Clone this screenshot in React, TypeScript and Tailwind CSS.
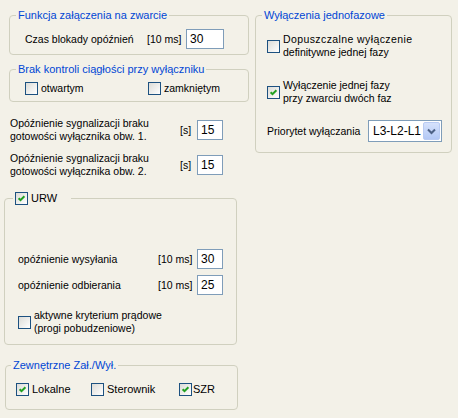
import React from "react";

function Box({ checked }: { checked?: boolean }) {
  return (
    <span className="relative inline-block w-[13px] h-[13px] shrink-0 border border-[#1C5180] bg-linear-to-br from-[#DCDCD7] to-white">
      {checked && (
        <svg className="absolute left-0 top-0" width="11" height="11" viewBox="0 0 11 11">
          <path d="M2.6 5.3 L4.5 7.2 L8.4 3.3" stroke="#21A121" strokeWidth="2" fill="none" />
        </svg>
      )}
    </span>
  );
}

function Input({ value, w }: { value: string; w: string }) {
  return (
    <div className={`${w} h-[20px] bg-white border border-[#7F9DB9] pl-[3px] flex items-center text-[12px]`}>
      {value}
    </div>
  );
}

export default function App() {
  return (
    <div className="w-[458px] h-[418px] bg-[#F3F1E8] overflow-hidden flex font-['Liberation_Sans',Arial,sans-serif] text-[10.5px] leading-[13px] text-black">
      {/* left column */}
      <div className="w-[250px] shrink-0 flex flex-col">
        <fieldset className="ml-[9px] mt-[9px] w-[240px] border border-[#D0D0BF] rounded-[4px] pb-[5px]">
          <legend className="ml-[6px] px-[2px] text-[#0046D5] text-[11px]">Funkcja załączenia na zwarcie</legend>
          <div className="mt-[7px] h-[20px] flex items-center pl-[15px]">
            <span className="w-[122px]">Czas blokady opóźnień</span>
            <span className="w-[39px]">[10 ms]</span>
            <Input value="30" w="w-[38px]" />
          </div>
        </fieldset>

        <fieldset className="ml-[9px] mt-[8px] w-[240px] border border-[#D0D0BF] rounded-[4px] pb-[6px]">
          <legend className="ml-[6px] px-[2px] text-[#0046D5] text-[11px]">Brak kontroli ciągłości przy wyłączniku</legend>
          <div className="mt-[6px] h-[13px] flex items-center pl-[15px]">
            <div className="w-[123px] flex items-center gap-[3px]">
              <Box />
              <span>otwartym</span>
            </div>
            <div className="flex items-center gap-[3px]">
              <Box />
              <span>zamkniętym</span>
            </div>
          </div>
        </fieldset>

        <div className="mt-[15px] ml-[10px] h-[26px] flex items-center">
          <div className="w-[170px]">
            <div>Opóźnienie sygnalizacji braku</div>
            <div>gotowości wyłącznika obw. 1.</div>
          </div>
          <span className="w-[17px]">[s]</span>
          <Input value="15" w="w-[26px]" />
        </div>
        <div className="mt-[9px] ml-[10px] h-[26px] flex items-center">
          <div className="w-[170px]">
            <div>Opóźnienie sygnalizacji braku</div>
            <div>gotowości wyłącznika obw. 2.</div>
          </div>
          <span className="w-[17px]">[s]</span>
          <Input value="15" w="w-[26px]" />
        </div>

        <fieldset className="ml-[4px] mt-[14px] w-[233px] border border-[#D0D0BF] rounded-[4px] pb-[9px]">
          <legend className="ml-[8px] pl-[2px] pr-[14px] text-[11px]">
            <span className="flex items-center gap-[3px] h-[13px]">
              <Box checked />
              <span>URW</span>
            </span>
          </legend>
          <div className="mt-[44px] h-[20px] flex items-center pl-[13px]">
            <span className="w-[140px]">opóźnienie wysyłania</span>
            <span className="w-[39px]">[10 ms]</span>
            <Input value="30" w="w-[26px]" />
          </div>
          <div className="mt-[6px] h-[20px] flex items-center pl-[13px]">
            <span className="w-[140px]">opóźnienie odbierania</span>
            <span className="w-[39px]">[10 ms]</span>
            <Input value="25" w="w-[26px]" />
          </div>
          <div className="mt-[14px] h-[26px] flex items-center pl-[13px] gap-[3px]">
            <Box />
            <div>
              <div>aktywne kryterium prądowe</div>
              <div>(progi pobudzeniowe)</div>
            </div>
          </div>
        </fieldset>

        <fieldset className="ml-[5px] mt-[14px] w-[233px] border border-[#D0D0BF] rounded-[4px] pb-[13px]">
          <legend className="ml-[5px] px-[2px] text-[#0046D5] text-[11px]">Zewnętrzne Zał./Wył.</legend>
          <div className="mt-[11px] h-[13px] flex items-center pl-[10px] text-[11px]">
            <div className="w-[75px] flex items-center gap-[3px]">
              <Box checked />
              <span>Lokalne</span>
            </div>
            <div className="w-[88px] flex items-center gap-[3px]">
              <Box />
              <span>Sterownik</span>
            </div>
            <div className="flex items-center gap-[1px]">
              <Box checked />
              <span>SZR</span>
            </div>
          </div>
        </fieldset>
      </div>

      {/* right column */}
      <div className="flex flex-col">
        <fieldset className="ml-[5px] mt-[9px] w-[197px] border border-[#D0D0BF] rounded-[4px] pb-[10px] pl-[11px]">
          <legend className="-ml-[5px] px-[2px] text-[#0046D5] text-[11px]">Wyłączenia jednofazowe</legend>
          <div className="mt-[11px] h-[26px] flex items-center gap-[3px]">
            <Box />
            <div>
              <div className="tracking-[0.4px]">Dopuszczalne wyłączenie</div>
              <div>definitywne jednej fazy</div>
            </div>
          </div>
          <div className="mt-[20px] h-[26px] flex items-center gap-[3px]">
            <Box checked />
            <div>
              <div>Wyłączenie jednej fazy</div>
              <div>przy zwarciu dwóch faz</div>
            </div>
          </div>
          <div className="mt-[15px] h-[22px] flex items-center">
            <span className="w-[101px]">Priorytet wyłączania</span>
            <div className="w-[74px] h-[22px] bg-white border border-[#7F9DB9] flex items-center">
              <span className="flex-1 pl-[4px] text-[12px]">L3-L2-L1</span>
              <div className="w-[17px] h-[18px] mr-[1px] rounded-[2px] border border-[#B9CBF3] bg-linear-to-b from-[#D6E2FC] to-[#B3C8F5] flex items-center justify-center">
                <svg width="9" height="7" viewBox="0 0 9 7">
                  <path d="M1 1.5 L4.5 5 L8 1.5" stroke="#4D6185" strokeWidth="2" fill="none" />
                </svg>
              </div>
            </div>
          </div>
        </fieldset>
      </div>
    </div>
  );
}
